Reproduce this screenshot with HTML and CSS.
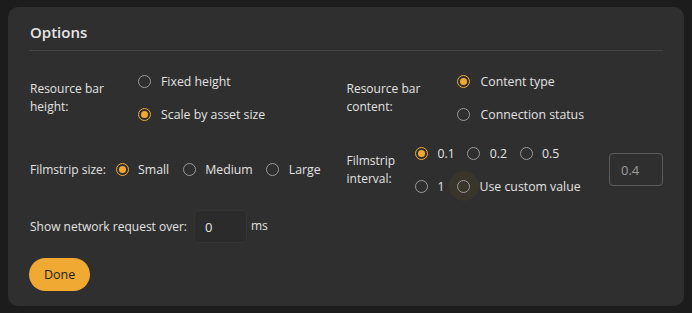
FILE: index.html
```html
<!DOCTYPE html>
<html>
<head>
<meta charset="utf-8">
<link rel="stylesheet" href="styles.css">
</head>
<body>
<div class="panel">
  <div class="header"><h2 class="title">Options</h2></div>
  <div class="grid">
    <div class="field">
      <span class="label w99">Resource bar height:</span>
      <div class="radios col">
        <label class="opt"><span class="radio"></span><span class="txt">Fixed height</span></label>
        <label class="opt"><span class="radio on"></span><span class="txt">Scale by asset size</span></label>
      </div>
    </div>
    <div class="field">
      <span class="label w102">Resource bar content:</span>
      <div class="radios col">
        <label class="opt"><span class="radio on"></span><span class="txt">Content type</span></label>
        <label class="opt"><span class="radio"></span><span class="txt">Connection status</span></label>
      </div>
    </div>
    <div class="field">
      <span class="label">Filmstrip size:</span>
      <div class="radios row">
        <label class="opt"><span class="radio on"></span><span class="txt">Small</span></label>
        <label class="opt"><span class="radio"></span><span class="txt">Medium</span></label>
        <label class="opt"><span class="radio"></span><span class="txt">Large</span></label>
      </div>
    </div>
    <div class="field">
      <span class="label w60">Filmstrip interval:</span>
      <div class="radios wrap">
        <label class="opt"><span class="radio on"></span><span class="txt">0.1</span></label>
        <label class="opt"><span class="radio"></span><span class="txt">0.2</span></label>
        <label class="opt"><span class="radio"></span><span class="txt">0.5</span></label>
        <label class="opt"><span class="radio"></span><span class="txt">1</span></label>
        <label class="opt"><span class="radio hover"></span><span class="txt">Use custom value</span></label>
      </div>
      <div class="custom">0.4</div>
    </div>
  </div>
  <div class="network">
    <span class="label">Show network request over:</span>
    <div class="num">0</div>
    <span class="unit">ms</span>
  </div>
  <button class="done">Done</button>
</div>
</body>
</html>
```

FILE: styles.css
```css
* { box-sizing: border-box; }
html, body { margin: 0; padding: 0; }
body {
  width: 692px;
  height: 313px;
  background: #1c1c1c;
  font-family: "Open Sans", "DejaVu Sans", sans-serif;
  font-size: 12px;
  font-weight: 500;
  color: #e2e2e2;
  padding: 7px 8px;
}
.panel {
  background: #2f2f2f;
  border-radius: 10px;
  padding: 13px 21px 15px 21px;
  height: 299px;
}
.header {
  border-bottom: 1px solid #444;
  padding: 1px 0 7px 1px;
}
.title {
  margin: 0;
  font-size: 15px;
  font-weight: 600;
  line-height: 22px;
  color: #e6e6e6;
}
.grid {
  display: grid;
  grid-template-columns: 1fr 1fr;
  row-gap: 9px;
  margin-top: 15px;
  padding-left: 1px;
}
.field {
  display: flex;
  align-items: center;
}
.label {
  line-height: 18px;
  flex: none;
}
.w99 { width: 99px; }
.w102 { width: 102px; }
.w60 { width: 60px; }
.radios { display: flex; }
.radios.col { flex-direction: column; gap: 3px; }
.radios.col .txt { padding-left: 2px; }
.radios.row { margin-left: 1px; gap: 5px; }
.radios.wrap { flex-wrap: wrap; width: 185px; row-gap: 3px; column-gap: 4px; }
.opt {
  display: flex;
  align-items: center;
  height: 30px;
}
.radio {
  width: 30px;
  height: 30px;
  border-radius: 50%;
  position: relative;
  flex: none;
}
.radio::before {
  content: "";
  position: absolute;
  left: 8.5px;
  top: 8.5px;
  width: 13px;
  height: 13px;
  border-radius: 50%;
  border: 1.5px solid #9a9a9a;
  box-sizing: border-box;
}
.radio.on::before { border-color: #f2a934; }
.radio.on::after {
  content: "";
  position: absolute;
  left: 11.5px;
  top: 11.5px;
  width: 7px;
  height: 7px;
  border-radius: 50%;
  background: #f2a934;
}
.radio.hover { background: #3a352b; }
.txt { padding-left: 1px; font-size: 12.3px; }
.custom {
  margin-left: auto;
  width: 54px;
  height: 33px;
  border: 1px solid #5c5c5c;
  border-radius: 4px;
  color: #9c9c9c;
  padding-left: 11px;
  display: flex;
  align-items: center;
  font-size: 13px;
}
.network {
  display: flex;
  align-items: center;
  margin-top: 9px;
  padding-left: 1px;
}
.num {
  margin-left: 7px;
  width: 53px;
  height: 33px;
  background: #2b2b2b;
  border: 1px solid #343434;
  border-radius: 4px;
  padding-left: 10px;
  display: flex;
  align-items: center;
  font-size: 13px;
}
.unit { margin-left: 4px; margin-top: -3px; }
.done {
  display: block;
  margin-top: 15px;
  height: 33px;
  padding: 0 15px;
  border: none;
  border-radius: 17px;
  background: #f0a932;
  color: #1e1e1e;
  font-family: inherit;
  font-size: 12.5px;
  font-weight: 500;
}
```
